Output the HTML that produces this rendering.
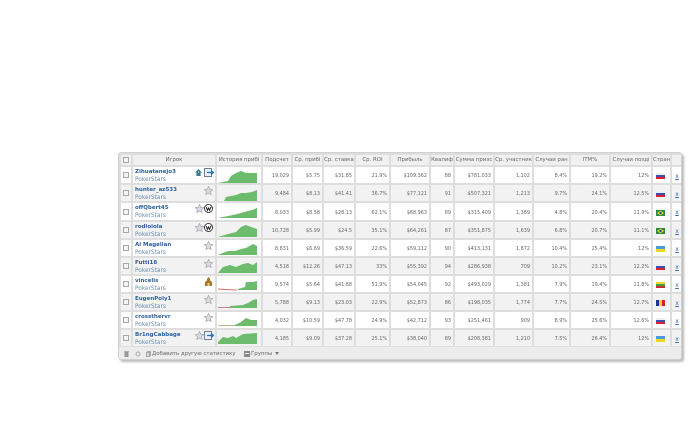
<!DOCTYPE html>
<html><head><meta charset="utf-8">
<style>
html,body{margin:0;padding:0;background:#fff;width:700px;height:437px;overflow:hidden}
#w{position:absolute;left:118px;top:152px;width:564px;height:208px;background:#eee;border:1px solid #d0d0d0;border-radius:3px;box-shadow:2px 2px 2px #bbb;overflow:hidden;box-sizing:border-box;filter:blur(.3px)}
table{position:absolute;left:0;top:0;border-collapse:collapse;table-layout:fixed;width:563px;font:4.9px "DejaVu Sans",sans-serif;color:#666}
td,th{border:2px solid #dedede;padding:2px 2px 0 0;text-align:right;white-space:nowrap;overflow:hidden;position:relative;box-sizing:border-box}
th{font-weight:normal;font-size:5.4px;height:12px;background:#f0f0f0;text-align:center;color:#666;padding:0}
tr{height:18px}
tr.t{height:19px}
tr.a td{background:#f2f2f2}
tr.b td{background:#fff}
.c{display:block;width:6px;height:6px;border:1px solid #a8a8a8;background:#f4f4f4;margin:auto;box-sizing:border-box}
.n{position:absolute;left:2px;top:2px;font-weight:bold;font-size:5.5px;color:#2b5f9e}
.p{position:absolute;left:2px;top:10px;font-size:5.8px;color:#6a8cb0}
td svg{position:absolute;transform:translateX(-1px)}
.g{left:2px;top:0}
.f{display:block;width:9px;height:6px;margin:auto;position:static!important}
td.x{color:#3a6cb0;text-decoration:underline;text-align:center;padding:2px 0 0;font-size:6px}
#b{position:absolute;left:0;top:194px;width:563px;height:13px;background:#ececec;font:5.4px "DejaVu Sans",sans-serif;color:#666}
#b span{position:absolute;top:4px}
</style></head><body>
<div id="w">
<table>
<colgroup><col style="width:12px"><col style="width:84px"><col style="width:46px"><col style="width:30px"><col style="width:31px"><col style="width:32px"><col style="width:35px"><col style="width:40px"><col style="width:24px"><col style="width:40px"><col style="width:39px"><col style="width:37px"><col style="width:40px"><col style="width:42px"><col style="width:19px"><col style="width:12px"></colgroup>
<tr style="height:12px"><th><i class="c"></i></th><th>Игрок</th><th>История прибі</th><th>Подсчет</th><th>Ср. прибі</th><th>Ср. ставка</th><th>Ср. ROI</th><th>Прибыль</th><th>Квалиф</th><th>Сумма призс</th><th>Ср. участник</th><th>Случаи ран</th><th>ITM%</th><th>Случаи позді</th><th>Стран</th><th></th></tr>

<tr class="b"><td style="padding:0"><i class="c"></i></td><td><span class="n">Zihuatanejo3</span><span class="p">PokerStars</span>
<svg style="left:63px;top:2px" width="7" height="7" viewBox="0 0 10 10"><path d="M5 0L10 5H8V10H2V5H0Z" fill="#3d7c8c"/><path d="M5 3L6 5H4Z" fill="#fff"/></svg>
<svg style="left:72px;top:1px" width="10" height="9" viewBox="0 0 10 9"><rect x=".5" y=".5" width="7" height="8" fill="#eef" stroke="#68809c"/><path d="M3 4.500H9M7 2.500L9.500 4.500L7 6.500" fill="none" stroke="#2a70b8" stroke-width="1.300"/></svg></td>
<td><svg class="g" width="42" height="18"><path d="M0 16L10 14L13 9L18 6L23 4L28 6L39 6V16Z" fill="#6dbb6d"/></svg></td><td>19,029</td><td>$5.75</td><td>$31.85</td><td>21.9%</td><td>$109,362</td><td>88</td><td>$781,033</td><td>1,102</td><td>8.4%</td><td>19.2%</td><td>12%</td><td style="padding:2px 0 0"><svg class="f" viewBox="0 0 9 6"><rect width="9" height="2" fill="#eee"/><rect y="2" width="9" height="2" fill="#3a4fb0"/><rect y="4" width="9" height="2" fill="#e02030"/></svg></td><td class="x">x</td></tr>

<tr class="a"><td style="padding:0"><i class="c"></i></td><td><span class="n">hunter_az533</span><span class="p">PokerStars</span>
<svg style="left:72px;top:1px" width="9" height="9" viewBox="0 0 10 10"><path d="M5 .5L6.400 3.600L9.700 4L7.200 6.200L8 9.500L5 7.800L2 9.500L2.800 6.200L.3 4L3.600 3.600Z" fill="#dcdce4" stroke="#a8a8b0" stroke-width=".8"/></svg></td>
<td><svg class="g" width="42" height="18"><path d="M6 16L8 12L13 11L18 10L23 8L28 8L34 7L39 5V16Z" fill="#6dbb6d"/></svg></td><td>9,484</td><td>$8.13</td><td>$41.41</td><td>36.7%</td><td>$77,121</td><td>91</td><td>$507,321</td><td>1,213</td><td>9.7%</td><td>24.1%</td><td>12.5%</td><td style="padding:2px 0 0"><svg class="f" viewBox="0 0 9 6"><rect width="9" height="2" fill="#eee"/><rect y="2" width="9" height="2" fill="#3a4fb0"/><rect y="4" width="9" height="2" fill="#e02030"/></svg></td><td class="x">x</td></tr>

<tr class="t b"><td style="padding:0"><i class="c"></i></td><td><span class="n">offQbert45</span><span class="p">PokerStars</span>
<svg style="left:63px;top:1px" width="9" height="9" viewBox="0 0 10 10"><path d="M5 .5L6.400 3.600L9.700 4L7.200 6.200L8 9.500L5 7.800L2 9.500L2.800 6.200L.3 4L3.600 3.600Z" fill="#dcdce4" stroke="#a8a8b0" stroke-width=".8"/></svg>
<svg style="left:72px;top:1px" width="9" height="9" viewBox="0 0 10 10"><circle cx="5" cy="5" r="4.500" fill="#fff" stroke="#333"/><path d="M2.500 3.500L3.800 7L5 4.500L6.200 7L7.800 3" fill="none" stroke="#222" stroke-width="1.100"/></svg></td>
<td><svg class="g" width="42" height="18"><path d="M0 15L10 13L15 12L23 10L30 8L34 7L39 5V15Z" fill="#6dbb6d"/></svg></td><td>8,033</td><td>$8.58</td><td>$28.13</td><td>62.1%</td><td>$68,963</td><td>89</td><td>$315,409</td><td>1,369</td><td>4.8%</td><td>20.4%</td><td>11.9%</td><td style="padding:2px 0 0"><svg class="f" viewBox="0 0 9 6"><rect width="9" height="6" fill="#2c8a3c"/><path d="M4.500 .6L8 3L4.500 5.400L1 3Z" fill="#e8d840"/><circle cx="4.500" cy="3" r="1.200" fill="#2a4a90"/></svg></td><td class="x">x</td></tr>

<tr class="a"><td style="padding:0"><i class="c"></i></td><td><span class="n">rodloiola</span><span class="p">PokerStars</span>
<svg style="left:63px;top:1px" width="9" height="9" viewBox="0 0 10 10"><path d="M5 .5L6.400 3.600L9.700 4L7.200 6.200L8 9.500L5 7.800L2 9.500L2.800 6.200L.3 4L3.600 3.600Z" fill="#dcdce4" stroke="#a8a8b0" stroke-width=".8"/></svg>
<svg style="left:72px;top:1px" width="9" height="9" viewBox="0 0 10 10"><circle cx="5" cy="5" r="4.500" fill="#fff" stroke="#333"/><path d="M2.500 3.500L3.800 7L5 4.500L6.200 7L7.800 3" fill="none" stroke="#222" stroke-width="1.100"/></svg></td>
<td><svg class="g" width="42" height="18"><path d="M0 15L10 12L18 10L23 5L28 3L33 5L39 7V15Z" fill="#6dbb6d"/></svg></td><td>10,728</td><td>$5.99</td><td>$24.5</td><td>35.1%</td><td>$64,261</td><td>87</td><td>$351,875</td><td>1,639</td><td>6.8%</td><td>20.7%</td><td>11.1%</td><td style="padding:2px 0 0"><svg class="f" viewBox="0 0 9 6"><rect width="9" height="6" fill="#2c8a3c"/><path d="M4.500 .6L8 3L4.500 5.400L1 3Z" fill="#e8d840"/><circle cx="4.500" cy="3" r="1.200" fill="#2a4a90"/></svg></td><td class="x">x</td></tr>

<tr class="b"><td style="padding:0"><i class="c"></i></td><td><span class="n">Al Magellan</span><span class="p">PokerStars</span>
<svg style="left:72px;top:1px" width="9" height="9" viewBox="0 0 10 10"><path d="M5 .5L6.400 3.600L9.700 4L7.200 6.200L8 9.500L5 7.800L2 9.500L2.800 6.200L.3 4L3.600 3.600Z" fill="#dcdce4" stroke="#a8a8b0" stroke-width=".8"/></svg></td>
<td><svg class="g" width="42" height="18"><path d="M0 15L10 11L17 11L23 9L28 8L35 4L39 6V15Z" fill="#6dbb6d"/></svg></td><td>8,831</td><td>$6.69</td><td>$36.59</td><td>22.6%</td><td>$59,112</td><td>90</td><td>$413,131</td><td>1,872</td><td>10.4%</td><td>25.4%</td><td>12%</td><td style="padding:2px 0 0"><svg class="f" viewBox="0 0 9 6"><rect width="9" height="3" fill="#4a9ae0"/><rect y="3" width="9" height="3" fill="#f2d820"/></svg></td><td class="x">x</td></tr>

<tr class="a"><td style="padding:0"><i class="c"></i></td><td><span class="n">Futti18</span><span class="p">PokerStars</span>
<svg style="left:72px;top:1px" width="9" height="9" viewBox="0 0 10 10"><path d="M5 .5L6.400 3.600L9.700 4L7.200 6.200L8 9.500L5 7.800L2 9.500L2.800 6.200L.3 4L3.600 3.600Z" fill="#dcdce4" stroke="#a8a8b0" stroke-width=".8"/></svg></td>
<td><svg class="g" width="42" height="18"><path d="M0 15L5 9L12 7L18 9L25 6L30 5L35 7L39 4V15Z" fill="#6dbb6d"/></svg></td><td>4,518</td><td>$12.26</td><td>$47.13</td><td>33%</td><td>$55,392</td><td>94</td><td>$286,938</td><td>709</td><td>10.2%</td><td>23.1%</td><td>12.2%</td><td style="padding:2px 0 0"><svg class="f" viewBox="0 0 9 6"><rect width="9" height="2" fill="#eee"/><rect y="2" width="9" height="2" fill="#3a4fb0"/><rect y="4" width="9" height="2" fill="#e02030"/></svg></td><td class="x">x</td></tr>

<tr class="b"><td style="padding:0"><i class="c"></i></td><td><span class="n">vincelis</span><span class="p">PokerStars</span>
<svg style="left:73px;top:1px" width="7" height="9" viewBox="0 0 7 9"><path d="M3.500 0L5 2V3.500L7 5V9H0V5L2 3.500V2Z" fill="#a8742c"/><rect x="2.500" y="6" width="2" height="3" fill="#f0d090"/></svg></td>
<td><svg class="g" width="42" height="18"><path d="M20 13L27 11L28 6L35 6L39 5V14H20Z" fill="#6dbb6d"/><path d="M0 13L8 13.500L19 14" stroke="#d87070" fill="none"/></svg></td><td>9,574</td><td>$5.64</td><td>$41.88</td><td>51.9%</td><td>$54,045</td><td>92</td><td>$493,029</td><td>1,381</td><td>7.9%</td><td>19.4%</td><td>11.8%</td><td style="padding:2px 0 0"><svg class="f" viewBox="0 0 9 6"><rect width="9" height="2" fill="#e8d830"/><rect y="2" width="9" height="2" fill="#4a9a40"/><rect y="4" width="9" height="2" fill="#c83030"/></svg></td><td class="x">x</td></tr>

<tr class="a"><td style="padding:0"><i class="c"></i></td><td><span class="n">EugenPoly1</span><span class="p">PokerStars</span>
<svg style="left:72px;top:1px" width="9" height="9" viewBox="0 0 10 10"><path d="M5 .5L6.400 3.600L9.700 4L7.200 6.200L8 9.500L5 7.800L2 9.500L2.800 6.200L.3 4L3.600 3.600Z" fill="#dcdce4" stroke="#a8a8b0" stroke-width=".8"/></svg></td>
<td><svg class="g" width="42" height="18"><path d="M12 12L25 11L30 9L35 6L39 5V14H12Z" fill="#6dbb6d"/><path d="M0 13.500H12" stroke="#d08080" fill="none"/></svg></td><td>5,788</td><td>$9.13</td><td>$23.03</td><td>22.9%</td><td>$52,873</td><td>86</td><td>$198,035</td><td>1,774</td><td>7.7%</td><td>24.5%</td><td>12.7%</td><td style="padding:2px 0 0"><svg class="f" viewBox="0 0 9 6"><rect width="3" height="6" fill="#2030a0"/><rect x="3" width="3" height="6" fill="#f0d020"/><rect x="6" width="3" height="6" fill="#d82030"/></svg></td><td class="x">x</td></tr>

<tr class="b"><td style="padding:0"><i class="c"></i></td><td><span class="n">crossthervr</span><span class="p">PokerStars</span>
<svg style="left:72px;top:1px" width="9" height="9" viewBox="0 0 10 10"><path d="M5 .5L6.400 3.600L9.700 4L7.200 6.200L8 9.500L5 7.800L2 9.500L2.800 6.200L.3 4L3.600 3.600Z" fill="#dcdce4" stroke="#a8a8b0" stroke-width=".8"/></svg></td>
<td><svg class="g" width="42" height="18"><path d="M17 13L23 10L28 6L33 8L39 8V14H17Z" fill="#6dbb6d"/><path d="M0 13.500H17" stroke="#b8b890" fill="none"/></svg></td><td>4,032</td><td>$10.59</td><td>$47.78</td><td>24.9%</td><td>$42,712</td><td>93</td><td>$251,461</td><td>909</td><td>8.9%</td><td>25.6%</td><td>12.6%</td><td style="padding:2px 0 0"><svg class="f" viewBox="0 0 9 6"><rect width="9" height="2" fill="#eee"/><rect y="2" width="9" height="2" fill="#3a4fb0"/><rect y="4" width="9" height="2" fill="#e02030"/></svg></td><td class="x">x</td></tr>

<tr class="a"><td style="padding:0"><i class="c"></i></td><td><span class="n">Br1ngCabbage</span><span class="p">PokerStars</span>
<svg style="left:63px;top:1px" width="9" height="9" viewBox="0 0 10 10"><path d="M5 .5L6.400 3.600L9.700 4L7.200 6.200L8 9.500L5 7.800L2 9.500L2.800 6.200L.3 4L3.600 3.600Z" fill="#dcdce4" stroke="#a8a8b0" stroke-width=".8"/></svg>
<svg style="left:72px;top:1px" width="10" height="9" viewBox="0 0 10 9"><rect x=".5" y=".5" width="7" height="8" fill="#eef" stroke="#68809c"/><path d="M3 4.500H9M7 2.500L9.500 4.500L7 6.500" fill="none" stroke="#2a70b8" stroke-width="1.300"/></svg></td>
<td><svg class="g" width="42" height="18"><path d="M0 12L5 7L10 8L15 6L18 8L25 4L39 3V14H0Z" fill="#6dbb6d"/></svg></td><td>4,185</td><td>$9.09</td><td>$37.28</td><td>25.1%</td><td>$38,040</td><td>89</td><td>$208,381</td><td>1,210</td><td>7.5%</td><td>26.4%</td><td>12%</td><td style="padding:2px 0 0"><svg class="f" viewBox="0 0 9 6"><rect width="9" height="3" fill="#4a9ae0"/><rect y="3" width="9" height="3" fill="#f2d820"/></svg></td><td class="x">x</td></tr>
</table>
<div id="b">
<svg style="position:absolute;left:5px;top:4px" width="5" height="6" viewBox="0 0 5 6"><rect x=".5" y="1" width="4" height="5" fill="#999"/><rect y="0" width="5" height="1" fill="#aaa"/></svg>
<svg style="position:absolute;left:16px;top:4px" width="6" height="6" viewBox="0 0 6 6"><circle cx="3" cy="3" r="2" fill="none" stroke="#aaa"/></svg>
<svg style="position:absolute;left:27px;top:4px" width="5" height="6" viewBox="0 0 5 6"><rect x="1.500" y=".5" width="3" height="4" fill="none" stroke="#999" stroke-width=".8"/><rect x=".5" y="1.500" width="3" height="4" fill="#ddd" stroke="#999" stroke-width=".8"/></svg>
<span style="left:33px">Добавить другую статистику</span>
<svg style="position:absolute;left:125px;top:4px" width="6" height="6"><rect width="6" height="6" fill="#888"/><rect x="1" y="2" width="4" height="1" fill="#eee"/></svg>
<span style="left:132px">Группы</span>
<svg style="position:absolute;left:156px;top:5px" width="4" height="3"><path d="M0 0H4L2 3Z" fill="#777"/></svg>
</div>
</div>
</body></html>
